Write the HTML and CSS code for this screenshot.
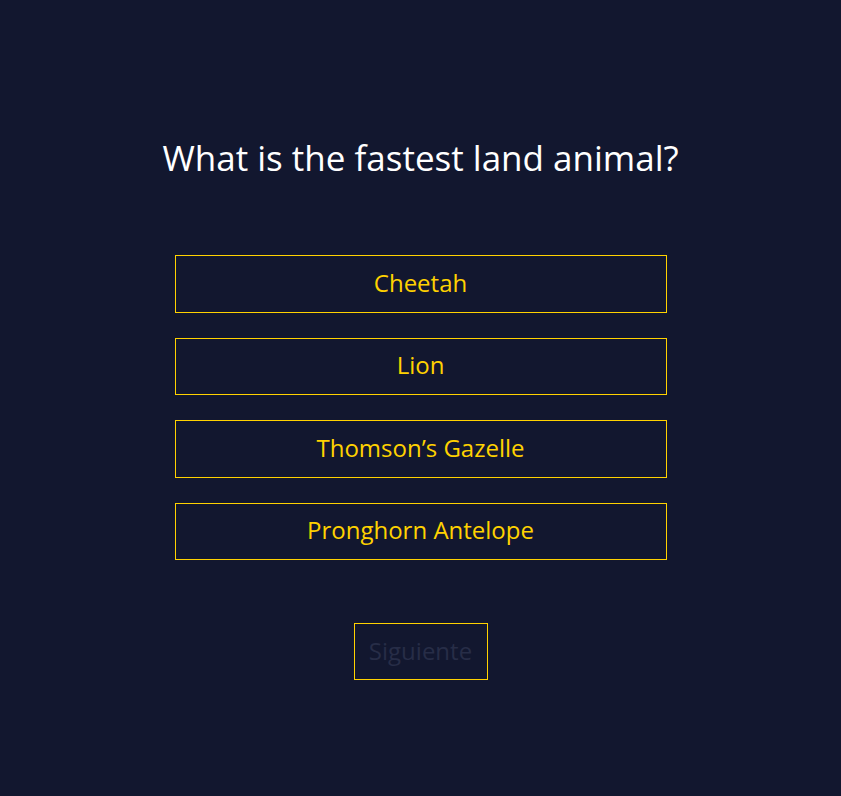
FILE: index.html
```html
<!DOCTYPE html>
<html lang="en">
<head>
<meta charset="utf-8">
<title>Quiz</title>
<link rel="stylesheet" href="styles.css">
</head>
<body>
<main class="quiz">
  <h1 class="question">What is the fastest land animal?</h1>
  <div class="answers">
    <button class="answer">Cheetah</button>
    <button class="answer">Lion</button>
    <button class="answer">Thomson’s Gazelle</button>
    <button class="answer">Pronghorn Antelope</button>
  </div>
  <button class="next" disabled>Siguiente</button>
</main>
</body>
</html>
```

FILE: styles.css
```css
html, body {
  margin: 0;
  padding: 0;
}
body {
  background: #12172f;
  min-height: 796px;
  font-family: "Trebuchet MS", "Open Sans", sans-serif;
}
.quiz {
  width: 492px;
  margin: 0 auto;
  padding-top: 136px;
  display: flex;
  flex-direction: column;
  align-items: center;
}
.question {
  margin: 0;
  color: #ffffff;
  font-weight: normal;
  font-size: 35px;
  line-height: 44px;
  text-align: center;
  white-space: nowrap;
}
.answers {
  width: 100%;
  margin-top: 75px;
  display: flex;
  flex-direction: column;
  gap: 25px;
}
.answer {
  box-sizing: border-box;
  width: 100%;
  height: 57.5px;
  background: transparent;
  border: 1px solid #ffd200;
  color: #ffd200;
  font-family: inherit;
  font-size: 24px;
  padding: 0 0 3px;
}
.next {
  box-sizing: border-box;
  margin-top: 63px;
  width: 134px;
  height: 57px;
  background: transparent;
  border: 1px solid #ffd200;
  color: #272d47;
  font-family: inherit;
  font-size: 24px;
  padding: 0 0 3px;
}
```
